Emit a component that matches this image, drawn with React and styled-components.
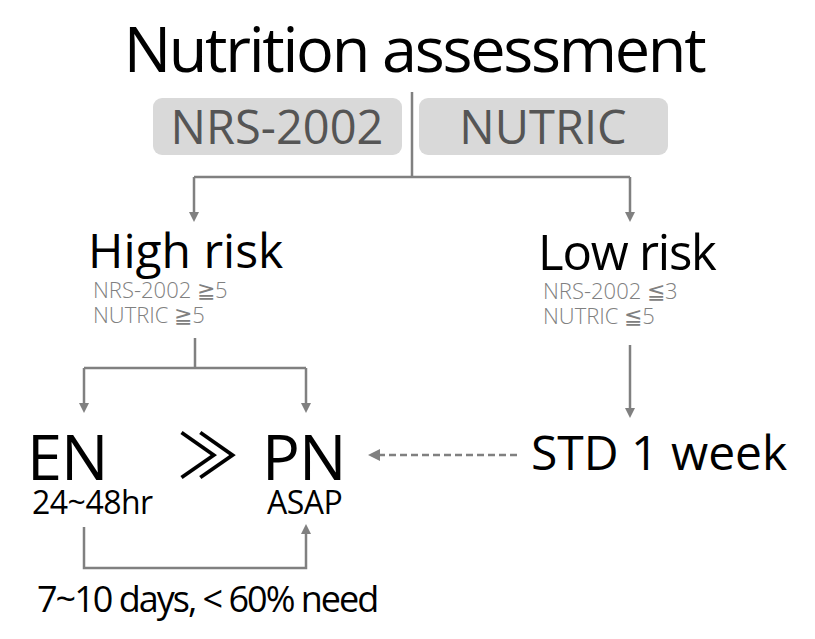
import React from "react";
import styled, { createGlobalStyle } from "styled-components";

const Global = createGlobalStyle`
  html, body {
    margin: 0;
    padding: 0;
    background: #ffffff;
  }
  body {
    font-family: "Open Sans", "Noto Sans", "DejaVu Sans", sans-serif;
    color: #000;
  }
`;

const LINE = "#808080";

// the flowchart is a free canvas: each node sits where the diagram puts it
const Canvas = styled.div`
  position: relative;
  width: 815px;
  height: 639px;
  overflow: hidden;
  background: #fff;
`;

const Node = styled.div`
  position: absolute;
  left: ${(p) => p.$x}px;
  top: ${(p) => p.$y}px;
  white-space: nowrap;
`;

const Header = styled(Node)`
  width: 820px;
  display: flex;
  flex-direction: column;
  align-items: center;
  gap: 17px;
`;

const Title = styled.div`
  font-size: 63px;
  line-height: 66px;
  letter-spacing: -2.3px;
  margin-left: 8px;
`;

const PillRow = styled.div`
  display: flex;
  gap: 17px;
`;

const Pill = styled.div`
  width: 249px;
  height: 57px;
  border-radius: 9px;
  background: #d9d9d9;
  color: #555;
  font-size: 47px;
  font-weight: 500;
  display: flex;
  align-items: center;
  justify-content: center;
  padding-bottom: 2px;
  box-sizing: border-box;
`;

const Stack = styled(Node)`
  display: flex;
  flex-direction: column;
  align-items: flex-start;
  gap: ${(p) => p.$gap || 0}px;
`;

const Heading = styled.div`
  font-size: ${(p) => p.$size || 48}px;
  line-height: 44px;
  letter-spacing: ${(p) => p.$ls || 0}px;
`;

const Criteria = styled.div`
  font-size: 22px;
  line-height: 25px;
  color: #808080;
  font-weight: 300;
  margin-left: 5px;
`;

const Big = styled.div`
  font-size: 63px;
  line-height: 56px;
  letter-spacing: -1px;
`;

const Much = styled(Node)`
  font-size: 62px;
  line-height: 1;
  font-family: "Noto Sans CJK JP", "DejaVu Sans", sans-serif;
  font-weight: 400;
  letter-spacing: 0;
`;

const Timing = styled.div`
  font-size: 32px;
  line-height: 30px;
  letter-spacing: -0.5px;
  margin-left: 5px;
`;

const Step = styled(Node)`
  font-size: 48px;
  line-height: 1;
`;

const Note = styled(Node)`
  font-size: 36px;
  line-height: 1;
  letter-spacing: -2px;
`;

const Lines = styled.svg`
  position: absolute;
  left: 0;
  top: 0;
  width: 815px;
  height: 639px;
  pointer-events: none;
`;

const Down = ({ x, y }) => (
  <polygon points={`${x - 5},${y - 10} ${x + 5},${y - 10} ${x},${y}`} fill={LINE} />
);
const Up = ({ x, y }) => (
  <polygon points={`${x - 5},${y + 10} ${x + 5},${y + 10} ${x},${y}`} fill={LINE} />
);
const Left = ({ x, y }) => (
  <polygon points={`${x + 12},${y - 6} ${x + 12},${y + 6} ${x},${y}`} fill={LINE} />
);

const Connectors = () => (
  <Lines viewBox="0 0 815 639">
    <g stroke={LINE} strokeWidth="2.5" fill="none">
      <path d="M412 92 V177 M194 177 H630 M194 177 V214 M630 177 V214" />
      <path d="M195 338 V368 M84 368 H306 M84 368 V405 M306 368 V405" />
      <path d="M630 345 V410" />
      <path d="M84 527 V568 H306 V532" />
      <path d="M378 455 H520" strokeDasharray="7 4" />
    </g>
    <Down x={194} y={222} />
    <Down x={630} y={222} />
    <Down x={84} y={413} />
    <Down x={306} y={413} />
    <Down x={630} y={418} />
    <Up x={306} y={524} />
    <Left x={368} y={455} />
  </Lines>
);

export default function App() {
  return (
    <Canvas>
      <Global />
      <Connectors />

      <Header $x={0} $y={15}>
        <Title>Nutrition assessment</Title>
        <PillRow>
          <Pill>NRS-2002</Pill>
          <Pill>NUTRIC</Pill>
        </PillRow>
      </Header>

      <Stack $x={88} $y={228} $gap={5}>
        <Heading>High risk</Heading>
        <Criteria>
          NRS-2002 ≧5
          <br />
          NUTRIC ≧5
        </Criteria>
      </Stack>

      <Stack $x={538} $y={229} $gap={5}>
        <Heading $size={49} $ls={-1.2}>Low risk</Heading>
        <Criteria>
          NRS-2002 ≦3
          <br />
          NUTRIC ≦5
        </Criteria>
      </Stack>

      <Stack $x={27} $y={428} $gap={3}>
        <Big>EN</Big>
        <Timing>24~48hr</Timing>
      </Stack>
      <Much $x={177} $y={421}>≫</Much>
      <Stack $x={262} $y={428} $gap={3}>
        <Big>PN</Big>
        <Timing>ASAP</Timing>
      </Stack>
      <Step $x={531} $y={428}>STD 1 week</Step>

      <Note $x={37} $y={581}>7~10 days, &lt; 60% need</Note>
    </Canvas>
  );
}
